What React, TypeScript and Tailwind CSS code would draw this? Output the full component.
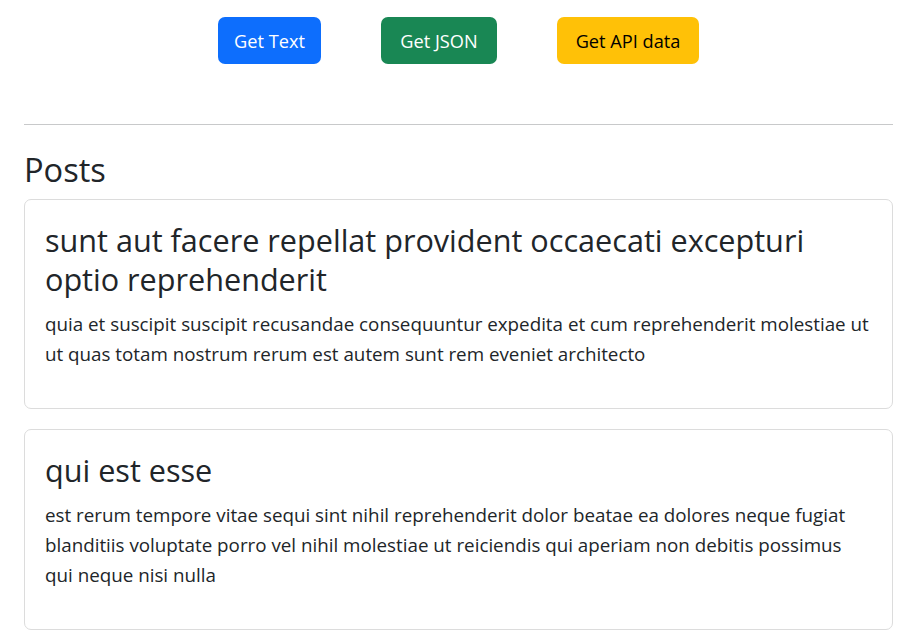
const posts = [
  {
    id: 1,
    title: "sunt aut facere repellat provident occaecati excepturi optio reprehenderit",
    body: "quia et suscipit suscipit recusandae consequuntur expedita et cum reprehenderit molestiae ut ut quas totam nostrum rerum est autem sunt rem eveniet architecto",
  },
  {
    id: 2,
    title: "qui est esse",
    body: "est rerum tempore vitae sequi sint nihil reprehenderit dolor beatae ea dolores neque fugiat blanditiis voluptate porro vel nihil molestiae ut reiciendis qui aperiam non debitis possimus qui neque nisi nulla",
  },
]

function PostCard({ title, body }: { title: string; body: string }) {
  return (
    <div className="mb-5 rounded-[7px] border border-[#dcdcdc] bg-white px-5 pt-[21px] pb-[19px]">
      <h3 className="mb-[10px] text-[30.6px] leading-[39px] font-normal">{title}</h3>
      <p className="mb-5 text-[18.8px] leading-[30px]">{body}</p>
    </div>
  )
}

export default function App() {
  return (
    <div className="min-h-screen bg-white pl-6 pr-[14px] pt-[17px] text-[#212529] [font-family:'Open_Sans',sans-serif]">
      <div className="flex justify-center gap-[60px]">
        <button className="h-[47px] w-[103px] rounded-[7px] bg-[#0d6efd] pt-[2px] text-[18.2px] text-white">Get Text</button>
        <button className="h-[47px] w-[116px] rounded-[7px] bg-[#198754] pt-[2px] text-[18.2px] text-white">Get JSON</button>
        <button className="h-[47px] w-[142px] rounded-[7px] bg-[#ffc107] pt-[2px] text-[18.2px] text-black">Get API data</button>
      </div>

      <hr className="mt-[60px] border-t border-[#c8c9ca]" />

      <h2 className="mt-[24px] mb-[8px] text-[32.6px] leading-[42px] font-normal">Posts</h2>

      {posts.map((p) => (
        <PostCard key={p.id} title={p.title} body={p.body} />
      ))}
    </div>
  )
}
